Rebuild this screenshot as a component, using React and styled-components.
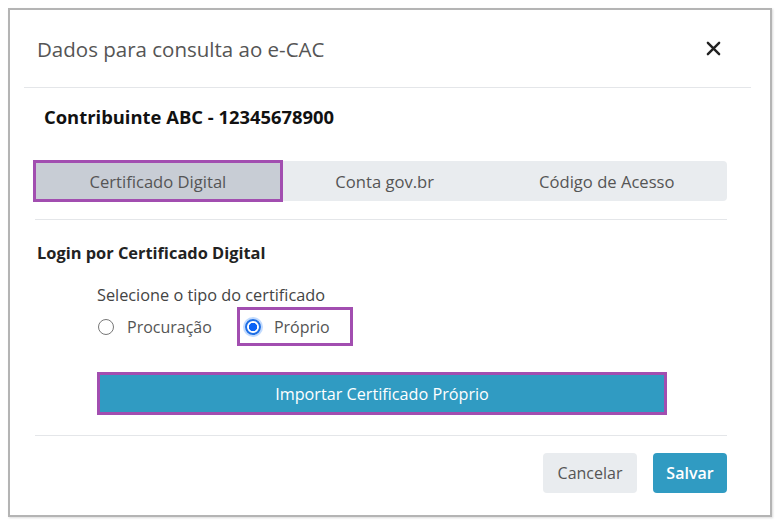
import styled, { createGlobalStyle } from "styled-components";
import { useState } from "react";

const GlobalStyle = createGlobalStyle`
  html, body {
    margin: 0;
    padding: 0;
    background: #ffffff;
  }
  body {
    font-family: "Open Sans", "Noto Sans", "Liberation Sans", sans-serif;
  }
`;

const tabs = ["Certificado Digital", "Conta gov.br", "Código de Acesso"];

function App() {
  const [activeTab, setActiveTab] = useState(0);
  const [certType, setCertType] = useState("proprio");

  return (
    <>
      <GlobalStyle />
      <StFrame>
        <StHeader>
          <StTitle>Dados para consulta ao e-CAC</StTitle>
          <StClose aria-label="Fechar">
            <svg width="15" height="15" viewBox="0 0 16 16">
              <path
                d="M2 2 L14 14 M14 2 L2 14"
                stroke="#222"
                strokeWidth="2.6"
                strokeLinecap="round"
              />
            </svg>
          </StClose>
        </StHeader>

        <StBody>
          <StTaxpayer>Contribuinte ABC - 12345678900</StTaxpayer>

          <StTabs>
            {tabs.map((t, i) => (
              <StTab
                key={t}
                $active={activeTab === i}
                onClick={() => setActiveTab(i)}
              >
                {t}
              </StTab>
            ))}
          </StTabs>

          <StDivider />

          <StSectionTitle>Login por Certificado Digital</StSectionTitle>

          <StCertBlock>
            <StHint>Selecione o tipo do certificado</StHint>
            <StRadioRow>
              <StRadioLabel>
                <StRadio
                  type="radio"
                  name="cert"
                  checked={certType === "procuracao"}
                  onChange={() => setCertType("procuracao")}
                />
                Procuração
              </StRadioLabel>
              <StRadioLabel $highlight>
                <StRadio
                  type="radio"
                  name="cert"
                  checked={certType === "proprio"}
                  onChange={() => setCertType("proprio")}
                />
                Próprio
              </StRadioLabel>
            </StRadioRow>
            <StImportBtn>Importar Certificado Próprio</StImportBtn>
          </StCertBlock>

          <StDivider $bottom />

          <StFooter>
            <StButton>Cancelar</StButton>
            <StButton $primary>Salvar</StButton>
          </StFooter>
        </StBody>
      </StFrame>
    </>
  );
}

const StFrame = styled.div`
  margin: 8px;
  width: 760px;
  height: 505px;
  border: 2px solid #b4b4b4;
  box-shadow: 1px 1px 2px rgba(0, 0, 0, 0.15);
  background: #fff;
  box-sizing: content-box;
`;

const StHeader = styled.div`
  display: flex;
  align-items: center;
  justify-content: space-between;
  height: 77px;
  margin: 0 19px 0 14px;
  padding: 0 30px 0 13px;
  border-bottom: 1px solid #e4e6e9;
`;

const StTitle = styled.h1`
  margin: 0;
  font-size: 20.5px;
  font-weight: 400;
  color: #555;
`;

const StClose = styled.button`
  display: flex;
  border: 0;
  background: none;
  padding: 0;
  cursor: pointer;
`;

const StBody = styled.div`
  display: flex;
  flex-direction: column;
  padding: 0 43px 0 25px;
`;

const StTaxpayer = styled.div`
  margin: 16px 0 0 9px;
  height: 26px;
  line-height: 26px;
  font-size: 18.4px;
  font-weight: 700;
  color: #111;
`;

const StTabs = styled.div`
  display: flex;
  margin-top: 31px;
  height: 40px;
  background: #e9ecef;
  border-radius: 4px;
`;

const StTab = styled.div`
  flex: 1 1 auto;
  display: flex;
  align-items: center;
  justify-content: center;
  font-size: 16.6px;
  color: #555;
  cursor: pointer;
  box-sizing: border-box;
  background: ${(p) => (p.$active ? "#c8cdd5" : "transparent")};
  border: ${(p) => (p.$active ? "3px solid #a24eb0" : "3px solid transparent")};
  margin: ${(p) => (p.$active ? "-1px 0 -1px -2px" : "0")};
  padding: ${(p) => (p.$active ? "0 4px" : "0")};
`;

const StDivider = styled.div`
  height: 1px;
  background: #e4e6e9;
  margin-top: ${(p) => (p.$bottom ? "20px" : "18px")};
`;

const StSectionTitle = styled.div`
  margin: 22px 0 0 2px;
  height: 22px;
  line-height: 22px;
  font-size: 16.4px;
  font-weight: 700;
  color: #222;
`;

const StCertBlock = styled.div`
  display: flex;
  flex-direction: column;
  align-items: flex-start;
  padding-left: 62px;
`;

const StHint = styled.div`
  margin-top: 20px;
  height: 22px;
  line-height: 22px;
  font-size: 16.3px;
  color: #444;
`;

const StRadioRow = styled.div`
  display: flex;
  align-items: center;
  gap: 25px;
  margin-top: 1px;
`;

const StRadioLabel = styled.label`
  display: flex;
  align-items: center;
  gap: 13px;
  height: 39px;
  box-sizing: border-box;
  font-size: 16px;
  color: #555;
  cursor: pointer;
  padding: ${(p) => (p.$highlight ? "0 20px 0 5px" : "0")};
  border: ${(p) => (p.$highlight ? "3px solid #a24eb0" : "none")};
  margin-left: ${(p) => (p.$highlight ? "0" : "1px")};
`;

const StRadio = styled.input`
  appearance: none;
  margin: 0;
  width: 16px;
  height: 16px;
  border-radius: 50%;
  border: 1.5px solid #777;
  background: #fff;
  box-sizing: border-box;

  &:checked {
    border: 2px solid #1f6fe5;
    background: radial-gradient(circle, #0b63f6 0 3.8px, #fff 4.5px);
    box-shadow: 0 0 0 2px rgba(13, 110, 253, 0.25);
  }
`;

const StImportBtn = styled.button`
  margin-top: 26px;
  width: 570px;
  height: 43px;
  border: 3px solid #a24eb0;
  background: #309bc2;
  color: #fff;
  font-family: inherit;
  font-size: 16.2px;
  cursor: pointer;
`;

const StFooter = styled.div`
  display: flex;
  justify-content: flex-end;
  gap: 16px;
  margin-top: 17px;
`;

const StButton = styled.button`
  height: 40px;
  width: ${(p) => (p.$primary ? "74px" : "94px")};
  padding: 0;
  border: 0;
  border-radius: 4px;
  background: ${(p) => (p.$primary ? "#309bc2" : "#e9ecef")};
  color: ${(p) => (p.$primary ? "#fff" : "#555")};
  font-family: inherit;
  font-size: 16px;
  font-weight: ${(p) => (p.$primary ? 600 : 400)};
  cursor: pointer;
`;

export default App;
